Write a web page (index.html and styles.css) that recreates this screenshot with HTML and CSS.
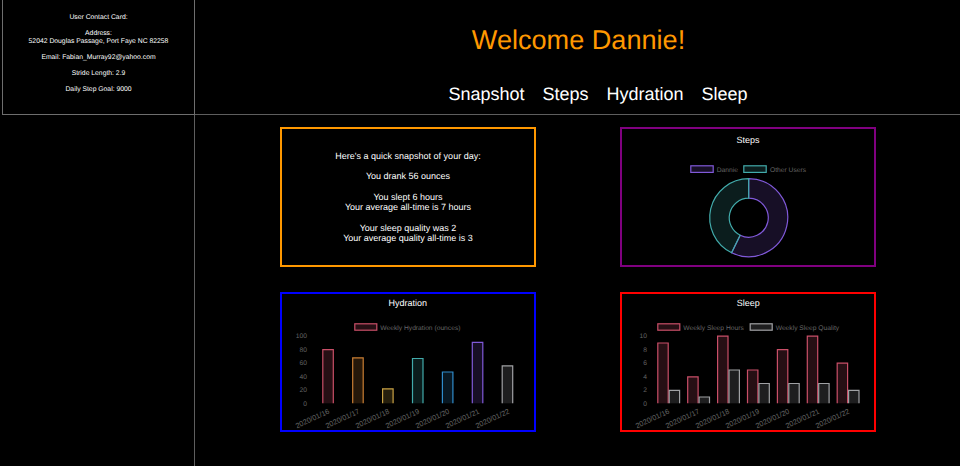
FILE: index.html
```html
<!DOCTYPE html>
<html lang="en">
  <head>
    <meta name="viewport" content="width=device-width, initial-scale=1.0">
    <meta charset="utf-8">
    <title>Activity Tracker</title>
    <link rel="stylesheet" href="styles.css">
  </head>
  <body>
    <aside class="contact">
      <p>User Contact Card:</p>
      <p>Address:<br>52042 Douglas Passage, Port Faye NC 82258</p>
      <p>Email: Fabian_Murray92@yahoo.com</p>
      <p>Stride Length: 2.9</p>
      <p>Daily Step Goal: 9000</p>
    </aside>
    <header class="top">
      <h1>Welcome Dannie!</h1>
      <nav class="nav">
        <a href="#snapshot">Snapshot</a>
        <a href="#steps">Steps</a>
        <a href="#hydration">Hydration</a>
        <a href="#sleep">Sleep</a>
      </nav>
    </header>
    <div class="side-space"></div>
    <main class="panels">
      <section class="panel panel-snapshot" id="snapshot">
        <p>Here's a quick snapshot of your day:</p>
        <p>You drank 56 ounces</p>
        <p>You slept 6 hours<br>Your average all-time is 7 hours</p>
        <p>Your sleep quality was 2<br>Your average quality all-time is 3</p>
      </section>

      <section class="panel panel-steps" id="steps">
        <svg class="chart" viewBox="0 0 252 136">
          <text class="chart-title" x="126" y="13.5">Steps</text>
          <rect class="purple" x="68.8" y="36.8" width="22.4" height="6.6"/>
          <text class="chart-label" x="94.7" y="42.7">Dannie</text>
          <rect class="teal" x="121.8" y="36.8" width="22.4" height="6.6"/>
          <text class="chart-label" x="148" y="42.7">Other Users</text>
          <path class="purple" d="M126.7 49.7A39 39 0 1 1 109.6 123.75L118.15 106.2A19.5 19.5 0 1 0 126.7 69.2Z"/>
          <path class="teal" d="M109.6 123.75A39 39 0 0 1 126.7 49.7L126.7 69.2A19.5 19.5 0 0 0 118.15 106.2Z"/>
        </svg>
      </section>

      <section class="panel panel-hydration" id="hydration">
        <svg class="chart" viewBox="0 0 252 136">
          <text class="chart-title" x="125.7" y="12">Hydration</text>
          <rect class="red" x="72.8" y="29.8" width="22" height="6.4"/>
          <text class="chart-label" x="98.3" y="35.5">Weekly Hydration (ounces)</text>

          <text class="chart-tick" x="25" y="44.2">100</text>
          <text class="chart-tick" x="25" y="57.7">80</text>
          <text class="chart-tick" x="25" y="71.2">60</text>
          <text class="chart-tick" x="25" y="84.8">40</text>
          <text class="chart-tick" x="25" y="98.3">20</text>
          <text class="chart-tick" x="25" y="111.8">0</text>

          <path class="red" d="M40.8 109.3V55.7h10.5v53.6"/>
          <path class="orange" d="M70.7 109.3V63.8h10.5v45.5"/>
          <path class="yellow" d="M100.6 109.3V94.9h10.5v14.4"/>
          <path class="teal" d="M130.5 109.3V64.5h10.5v44.8"/>
          <path class="blue" d="M160.4 109.3V78h10.5v31.3"/>
          <path class="purple" d="M190.3 109.3V48.3h10.5v61"/>
          <path class="gray" d="M220.2 109.3V71.9h10.5v37.4"/>

          <text class="chart-date" transform="translate(48 119) rotate(-25)">2020/01/16</text>
          <text class="chart-date" transform="translate(78 119) rotate(-25)">2020/01/17</text>
          <text class="chart-date" transform="translate(108 119) rotate(-25)">2020/01/18</text>
          <text class="chart-date" transform="translate(138 119) rotate(-25)">2020/01/19</text>
          <text class="chart-date" transform="translate(168 119) rotate(-25)">2020/01/20</text>
          <text class="chart-date" transform="translate(198 119) rotate(-25)">2020/01/21</text>
          <text class="chart-date" transform="translate(228 119) rotate(-25)">2020/01/22</text>
        </svg>
      </section>

      <section class="panel panel-sleep" id="sleep">
        <svg class="chart" viewBox="0 0 252 136">
          <text class="chart-title" x="126.3" y="12">Sleep</text>
          <rect class="red" x="35.8" y="29.8" width="22" height="6.4"/>
          <text class="chart-label" x="61.3" y="35.5">Weekly Sleep Hours</text>
          <rect class="gray" x="128.2" y="29.8" width="22" height="6.4"/>
          <text class="chart-label" x="153.7" y="35.5">Weekly Sleep Quality</text>

          <text class="chart-tick" x="25" y="44.2">10</text>
          <text class="chart-tick" x="25" y="57.7">8</text>
          <text class="chart-tick" x="25" y="71.2">6</text>
          <text class="chart-tick" x="25" y="84.8">4</text>
          <text class="chart-tick" x="25" y="98.3">2</text>
          <text class="chart-tick" x="25" y="111.8">0</text>

          <path class="red" d="M35.8 109.3V49h10.4v60.3"/>
          <path class="gray" d="M47.2 109.3V96.3h10.4v13"/>
          <path class="red" d="M65.7 109.3V82.8h10.4v26.5"/>
          <path class="gray" d="M77.1 109.3V103h10.4v6.3"/>
          <path class="red" d="M95.6 109.3V42.2h10.4v67.1"/>
          <path class="gray" d="M107 109.3V76h10.4v33.3"/>
          <path class="red" d="M125.5 109.3V76h10.4v33.3"/>
          <path class="gray" d="M136.9 109.3V89.5h10.4v19.8"/>
          <path class="red" d="M155.4 109.3V55.7h10.4v53.6"/>
          <path class="gray" d="M166.8 109.3V89.5h10.4v19.8"/>
          <path class="red" d="M185.3 109.3V42.2h10.4v67.1"/>
          <path class="gray" d="M196.7 109.3V89.5h10.4v19.8"/>
          <path class="red" d="M215.2 109.3V69.2h10.4v40.1"/>
          <path class="gray" d="M226.6 109.3V96.3h10.4v13"/>

          <text class="chart-date" transform="translate(48 119) rotate(-25)">2020/01/16</text>
          <text class="chart-date" transform="translate(78 119) rotate(-25)">2020/01/17</text>
          <text class="chart-date" transform="translate(108 119) rotate(-25)">2020/01/18</text>
          <text class="chart-date" transform="translate(138 119) rotate(-25)">2020/01/19</text>
          <text class="chart-date" transform="translate(168 119) rotate(-25)">2020/01/20</text>
          <text class="chart-date" transform="translate(198 119) rotate(-25)">2020/01/21</text>
          <text class="chart-date" transform="translate(228 119) rotate(-25)">2020/01/22</text>
        </svg>
      </section>
    </main>
  </body>
</html>
```

FILE: styles.css
```css
*,*::before,*::after {
  box-sizing: border-box;
}

html, body {
  height: 100%;
  margin: 0;
  padding: 0;
  overflow: hidden;
}

body {
  display: grid;
  grid-template-columns: 195px 1fr;
  grid-template-rows: 115px 1fr;
  background: #000;
  color: #fff;
  font-family: "Liberation Sans", Arial, sans-serif;
  text-rendering: geometricPrecision;
}

p, h1 {
  margin: 0;
}

a {
  text-decoration: none;
  color: inherit;
}

.contact {
  margin-left: 2px;
  padding-top: 14px;
  border: 1px solid #6e6e6e;
  border-top: 0;
  text-align: center;
  font-size: 6.8px;
  line-height: 8px;
}

.contact p {
  margin-bottom: 8px;
}

.top {
  display: flex;
  flex-direction: column;
  align-items: center;
  border-bottom: 1px solid #5e5e5e;
}

.top h1 {
  margin-top: 23px;
  margin-left: 2px;
  color: #ff9800;
  font-size: 27.1px;
  font-weight: normal;
  line-height: 34px;
}

.nav {
  display: flex;
  gap: 18px;
  margin-top: 26px;
  padding-left: 41px;
  font-size: 18px;
  line-height: 22px;
}

.side-space {
  border-right: 1px solid #5e5e5e;
}

.panels {
  display: grid;
  grid-template-columns: 256px 256px;
  grid-template-rows: 140px 140px;
  gap: 25px 84px;
  padding: 12px 0 0 85px;
}

.panel {
  border: 2px solid;
}

.panel-snapshot {
  display: flex;
  flex-direction: column;
  justify-content: center;
  gap: 10.3px;
  border-color: #ff9800;
  text-align: center;
  font-size: 9px;
  line-height: 10.3px;
}

.panel-steps {
  border-color: #800080;
}

.panel-hydration {
  border-color: #0000ff;
}

.panel-sleep {
  border-color: #ff0000;
}

.chart {
  display: block;
  width: 100%;
  height: 100%;
}

.chart text {
  font-family: "Liberation Sans", Arial, sans-serif;
}

.chart-title {
  fill: #fff;
  font-size: 9px;
  text-anchor: middle;
}

.chart-label, .chart-tick, .chart-date {
  fill: #666;
  font-size: 6.7px;
}

.chart-tick, .chart-date {
  text-anchor: end;
}

.chart-date {
  font-size: 7.3px;
}

.red, .orange, .yellow, .teal, .blue, .purple, .gray {
  fill-opacity: 0.15;
  stroke-width: 1.2;
}

.red {
  fill: rgb(255, 99, 132);
  stroke: #c94f68;
}

.orange {
  fill: rgb(255, 159, 64);
  stroke: #c97e33;
}

.yellow {
  fill: rgb(255, 205, 86);
  stroke: #c9a244;
}

.teal {
  fill: rgb(75, 192, 192);
  stroke: #42abab;
}

.blue {
  fill: rgb(54, 162, 235);
  stroke: #2f8ccb;
}

.purple {
  fill: rgb(153, 102, 255);
  stroke: #8059d9;
}

.gray {
  fill: rgb(201, 203, 207);
  stroke: #a0a1a4;
}
```
